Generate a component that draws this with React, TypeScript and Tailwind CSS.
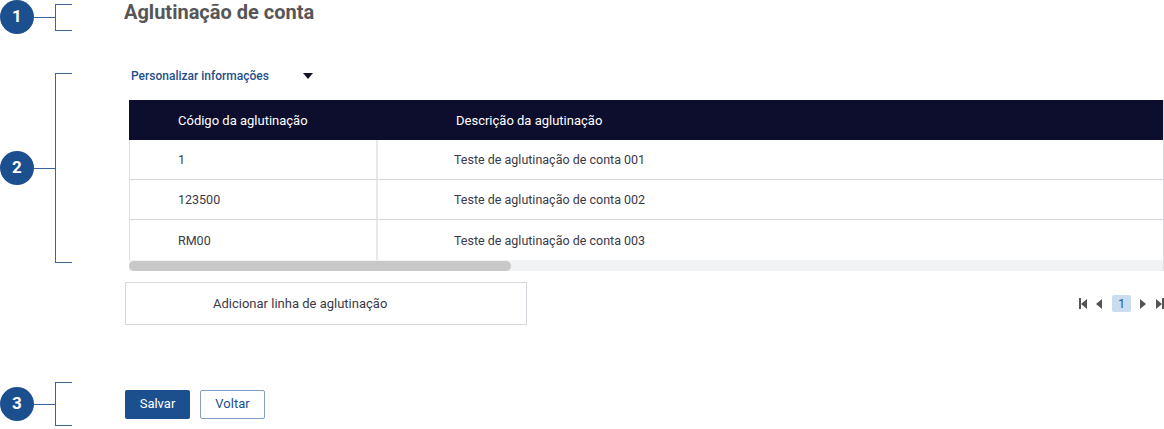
import React from "react";

const BLUE = "#1b4f8e";

function Marker({ n, h }: { n: number; h: number }) {
  return (
    <div className="flex items-center w-[124px] shrink-0">
      <div className="w-[34px] h-[34px] rounded-full bg-[#1b4f8e] text-white font-bold text-[17px] flex items-center justify-center shrink-0">
        {n}
      </div>
      <div className="w-[21px] h-px bg-[#3a659c] shrink-0" />
      <div
        className="w-[17px] border-l border-t border-b border-[#3a659c] shrink-0"
        style={{ height: h }}
      />
    </div>
  );
}

const rows = [
  ["1", "Teste de aglutinação de conta 001"],
  ["123500", "Teste de aglutinação de conta 002"],
  ["RM00", "Teste de aglutinação de conta 003"],
];

function Tri({ dir }: { dir: "l" | "r" }) {
  return (
    <svg width="6" height="10" viewBox="0 0 6 10" className="block">
      {dir === "l" ? (
        <polygon points="6,0 6,10 0,5" fill="#555" />
      ) : (
        <polygon points="0,0 0,10 6,5" fill="#555" />
      )}
    </svg>
  );
}

export default function App() {
  return (
    <div className="w-[1164px] h-[429px] overflow-hidden bg-white font-['Roboto',sans-serif] flex flex-col">
      {/* Section 1 */}
      <div className="flex items-start h-[34px]">
        <Marker n={1} h={27} />
        <h1 className="text-[20px] leading-[25px] font-bold text-[#565656] whitespace-nowrap">
          Aglutinação de conta
        </h1>
      </div>

      {/* Section 2 */}
      <div className="flex items-start mt-[34px]">
        <div className="mt-[5px]">
          <Marker n={2} h={190} />
        </div>
        <div className="flex-1 min-w-0 flex flex-col">
          <div className="flex items-center h-[16px] pl-[7px]">
            <span className="text-[12px] font-medium text-[#1f4f8b] whitespace-nowrap w-[172px]">
              Personalizar informações
            </span>
            <svg width="10" height="6" viewBox="0 0 10 6" className="block">
              <polygon points="0,0 10,0 5,6" fill="#141428" />
            </svg>
          </div>
          <div className="mt-[16px] ml-[5px] flex flex-col border-r border-[#dcdee2] overflow-hidden">
            <div className="flex h-[40px] bg-[#0d0e2e] text-white text-[13px] items-center pt-px">
              <div className="w-[249px] pl-[49px] whitespace-nowrap">Código da aglutinação</div>
              <div className="pl-[78px] whitespace-nowrap">Descrição da aglutinação</div>
            </div>
            {rows.map((r, i) => (
              <div
                key={i}
                className={`flex h-[40px] border-l border-[#e0e2e6] text-[12.5px] text-[#3a3a48] ${
                  i < 2 ? "border-b border-b-[#d6d8dc]" : ""
                }`}
              >
                <div className="w-[248px] pl-[48px] pt-[2px] flex items-center border-r-2 border-[#e6e8ec] whitespace-nowrap">
                  {r[0]}
                </div>
                <div className="pl-[76px] pt-[2px] flex items-center whitespace-nowrap">{r[1]}</div>
              </div>
            ))}
            <div className="h-[11px] bg-[#f1f2f4] flex items-center">
              <div className="w-[382px] h-[10px] rounded-full bg-[#c8c8c8]" />
            </div>
          </div>
        </div>
      </div>

      {/* Add row + pagination */}
      <div className="flex items-center mt-[11px] pl-[125px]">
        <div className="w-[402px] h-[43px] border border-[#d4d7dc] flex items-center pl-[87px] text-[13px] text-[#3a3a48] whitespace-nowrap">
          Adicionar linha de aglutinação
        </div>
        <div className="flex-1" />
        <div className="flex items-center">
          <div className="flex items-center">
            <div className="w-[2px] h-[11px] bg-[#555]" />
            <Tri dir="l" />
          </div>
          <div className="ml-[9px]">
            <Tri dir="l" />
          </div>
          <div className="ml-[10px] w-[19px] h-[17px] rounded-[2px] bg-[#c9dcf0] text-[#1b4f8e] text-[12px] flex items-center justify-center">
            1
          </div>
          <div className="ml-[9px]">
            <Tri dir="r" />
          </div>
          <div className="ml-[10px] flex items-center">
            <Tri dir="r" />
            <div className="w-[2px] h-[11px] bg-[#555]" />
          </div>
        </div>
      </div>

      {/* Section 3 */}
      <div className="flex items-center mt-[57px] h-[44px]">
        <Marker n={3} h={44} />
        <div className="flex items-center gap-[10px] ml-[1px]">
          <button
            className="w-[65px] h-[29px] rounded-[2px] text-white text-[13px]"
            style={{ backgroundColor: BLUE }}
          >
            Salvar
          </button>
          <button className="w-[65px] h-[29px] rounded-[2px] border border-[#7f9fc5] text-[#1b4f8e] text-[13px] bg-white">
            Voltar
          </button>
        </div>
      </div>
    </div>
  );
}
